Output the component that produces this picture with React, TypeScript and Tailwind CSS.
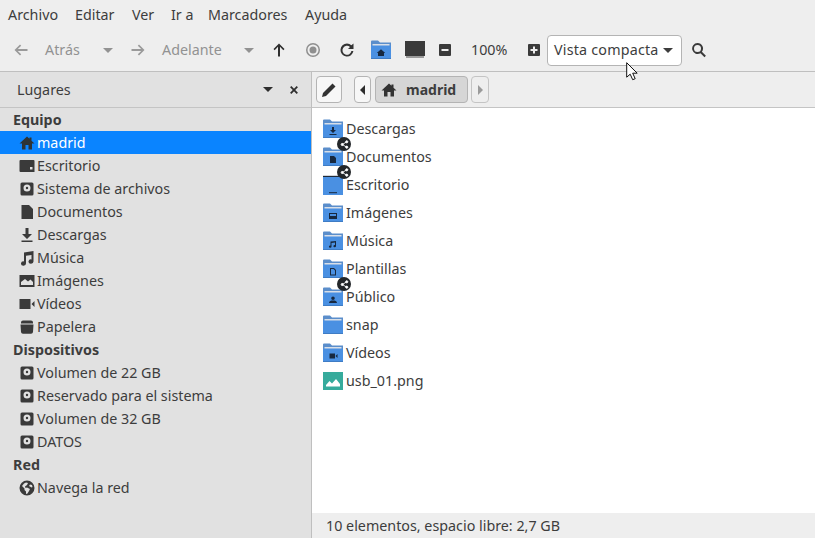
import type { ReactNode } from "react";

const FONT = "font-['Noto_Sans','Open_Sans',sans-serif]";

function Sym({ children, className = "" }: { children: ReactNode; className?: string }) {
  return (
    <svg viewBox="0 0 16 16" className={`h-4 w-4 shrink-0 ${className}`} fill="currentColor" aria-hidden>
      {children}
    </svg>
  );
}

const HomeGlyph = () => <path d="M8 1.500 .5 8.500h2.500v6h3.500V10h3v4.500H13v-6h2.500L12.500 5.700V2.500h-2v1.300z" />;
const DiskGlyph = () => (
  <path fillRule="evenodd" d="M3 1.500h10A1.500 1.500 0 0 1 14.500 3v10a1.500 1.500 0 0 1-1.500 1.500H3A1.500 1.500 0 0 1 1.500 13V3A1.500 1.500 0 0 1 3 1.500zM8 3.500a3.500 3.500 0 1 0 0 7 3.500 3.500 0 0 0 0-7zm0 2.300a1.200 1.200 0 1 1 0 2.400 1.200 1.200 0 0 1 0-2.400z" />
);

const placeIcons: Record<string, ReactNode> = {
  home: <HomeGlyph />,
  desktop: <path fillRule="evenodd" d="M1.500 2h13a1 1 0 0 1 1 1v11H1.500a1 1 0 0 1-1-1V3a1 1 0 0 1 1-1zM11 9v2.500h2.500V9z" />,
  disk: <DiskGlyph />,
  doc: <path d="M2.500 1h7.500L14 5v10H2.500z" />,
  down: <path d="M6.500 1h3v6H13l-5 5-5-5h3.500zM2.500 13.500h11V15h-11z" />,
  music: <path d="M5 2.500 14.500 1v10.500a2.500 2.200 0 1 1-2-2.100V5L7 5.800v7.700a2.500 2.200 0 1 1-2-2.100z" />,
  image: <path fillRule="evenodd" d="M.5 2h15v12H.5zM2 12h12V9l-2.500-2.500-2.500 2L6 6 2 9z" />,
  video: <path d="M.5 3h11v10H.5zM12.500 8l3-3v6z" />,
  trash: <path d="M4 1.500h8a2 2 0 0 1 2 2V4.500H2V3.500a2 2 0 0 1 2-2zM1.500 5.500h13L14 13a2 2 0 0 1-2 1.800H4A2 2 0 0 1 2 13z" />,
  globe: <path fillRule="evenodd" d="M8 .5a7.500 7.500 0 1 1 0 15A7.500 7.500 0 0 1 8 .5zM3 6l2.500 2.500V10L7 11.500V14l1.500-.5L10 11l1-2-3-1.500-1.500.5L6 6.500 8 5l1-2-2-.5-2 1zm8-1.500L10 6l2.500 1.500 1-.5-.5-2z" />,
};

const glyphs: Record<string, ReactNode> = {
  down: <path d="M9 8h2v3h2l-3 3-3-3h2zM6.500 15h7v1h-7z" />,
  doc: <path d="M7 9h4l2 2v5H7z" />,
  desktopBar: <path d="M6 17.200h8v1H6z" />,
  image: <path d="M6 10h8v6H6zM7 11v2h6v-2z" fillRule="evenodd" />,
  music: <path d="M7.500 10.500 13 10v5a1.300 1.100 0 1 1-1-1v-2.500l-3.500.4V15.500a1.300 1.100 0 1 1-1-1z" />,
  template: <path fillRule="evenodd" d="M7 9h4l2 2v5.500H7zM8 10v5.500h4V11.500L10.500 10z" />,
  public: <path d="M10 9.500a1.800 1.800 0 1 1 0 3.600 1.800 1.800 0 0 1 0-3.600zM6 16c0-2 2-2.500 4-2.500s4 .500 4 2.500z" />,
  video: <path d="M6.500 10.500h5.500v5H6.500zM12.500 13l2-2v4z" />,
  home: <path d="M10 9.200 5.800 13H7v3h6v-3h1.200z" />,
};

function Folder({ glyph, desktop = false }: { glyph?: string; desktop?: boolean }) {
  return (
    <svg viewBox="0 0 20 20" className="h-5 w-5 shrink-0" aria-hidden>
      {desktop ? (
        <>
          <path d="M0 1.500h20V20H0z" fill="#4a90e2" />
          <path d="M0 .8h20v1.200H0z" fill="#1f2a38" />
        </>
      ) : (
        <>
          <path d="M0 1.500A1 1 0 0 1 1 .5h6l2 2h11V8H0z" fill="#5b8ecb" />
          <path d="M1.500 4h17v3h-17z" fill="#d8dfe8" />
          <path d="M0 5.500h20V18a1 1 0 0 1-1 1H1a1 1 0 0 1-1-1z" fill="#4a90e2" />
          <path d="M0 18h20v1H0z" fill="#3f7cc4" />
        </>
      )}
      {glyph && <g fill="#17283f">{glyphs[glyph]}</g>}
    </svg>
  );
}

function ImageFile() {
  return (
    <svg viewBox="0 0 20 20" className="h-5 w-5 shrink-0" aria-hidden>
      <path d="M0 1h20v18H0z" fill="#36ab9c" />
      <path d="M3 15.500V14l3.500-4 2.500 2.500L13 8l4 5v2.500z" fill="#ffffff" />
    </svg>
  );
}

function ShareBadge() {
  return (
    <span className="absolute left-[14px] top-[-6px] flex h-[14px] w-[14px] items-center justify-center rounded-full bg-[#232629]">
      <svg viewBox="0 0 10 10" className="h-[9px] w-[9px]" fill="#fff" stroke="#fff" strokeWidth="1" aria-hidden>
        <path d="M7.500 2 2.500 5l5 3" fill="none" />
        <circle cx="7.500" cy="2" r="1.200" />
        <circle cx="2.500" cy="5" r="1.200" />
        <circle cx="7.500" cy="8" r="1.200" />
      </svg>
    </span>
  );
}

type PlaceRow = { kind: "head"; label: string } | { kind: "item"; label: string; icon: string; active?: boolean };

const places: PlaceRow[] = [
  { kind: "head", label: "Equipo" },
  { kind: "item", label: "madrid", icon: "home", active: true },
  { kind: "item", label: "Escritorio", icon: "desktop" },
  { kind: "item", label: "Sistema de archivos", icon: "disk" },
  { kind: "item", label: "Documentos", icon: "doc" },
  { kind: "item", label: "Descargas", icon: "down" },
  { kind: "item", label: "Música", icon: "music" },
  { kind: "item", label: "Imágenes", icon: "image" },
  { kind: "item", label: "Vídeos", icon: "video" },
  { kind: "item", label: "Papelera", icon: "trash" },
  { kind: "head", label: "Dispositivos" },
  { kind: "item", label: "Volumen de 22 GB", icon: "disk" },
  { kind: "item", label: "Reservado para el sistema", icon: "disk" },
  { kind: "item", label: "Volumen de 32 GB", icon: "disk" },
  { kind: "item", label: "DATOS", icon: "disk" },
  { kind: "head", label: "Red" },
  { kind: "item", label: "Navega la red", icon: "globe" },
];

const files = [
  { name: "Descargas", glyph: "down" },
  { name: "Documentos", glyph: "doc", shared: true },
  { name: "Escritorio", glyph: "desktopBar", shared: true, desktop: true },
  { name: "Imágenes", glyph: "image" },
  { name: "Música", glyph: "music" },
  { name: "Plantillas", glyph: "template" },
  { name: "Público", glyph: "public", shared: true },
  { name: "snap" },
  { name: "Vídeos", glyph: "video" },
  { name: "usb_01.png", image: true },
];

const menus = [
  { label: "Archivo", w: "w-[67px]" },
  { label: "Editar", w: "w-[57px]" },
  { label: "Ver", w: "w-[39px]" },
  { label: "Ir a", w: "w-[37px]" },
  { label: "Marcadores", w: "w-[97px]" },
  { label: "Ayuda", w: "w-[60px]" },
];

const Caret = ({ className = "" }: { className?: string }) => (
  <span className={`h-0 w-0 border-x-[5px] border-t-[5px] border-x-transparent ${className}`} />
);

function Toolbar() {
  return (
    <div className="flex h-[42px] items-center pl-[13px] text-[14.300px] text-[#3d3d3d]">
      <Sym className="text-[#9a9a9a]"><path d="M7 2.500 1.500 8 7 13.500l1.200-1.200L4.800 9H14.500V7H4.800l3.400-3.300z" /></Sym>
      <span className="ml-[16px] w-[36px] text-[#929292]">Atrás</span>
      <Caret className="ml-[22px] border-t-[#929292]" />
      <Sym className="ml-[17px] text-[#9a9a9a]"><path d="M9 2.500 14.500 8 9 13.500l-1.200-1.200L11.200 9H1.500V7h9.700L7.800 3.700z" /></Sym>
      <span className="ml-[16px] w-[60px] text-[#929292]">Adelante</span>
      <Caret className="ml-[22px] border-t-[#929292]" />
      <Sym className="ml-[17px] text-[#2e2e2e]"><path d="M8 1.500 13.500 7l-1.200 1.200L9 4.800V14.500H7V4.800L3.700 8.200 2.500 7z" /></Sym>
      <Sym className="ml-[18px] text-[#8f8f8f]">
        <path fillRule="evenodd" d="M8 1a7 7 0 1 1 0 14A7 7 0 0 1 8 1zm0 1.500a5.500 5.500 0 1 0 0 11 5.500 5.500 0 0 0 0-11zM8 4.500a3.500 3.500 0 1 1 0 7 3.500 3.500 0 0 1 0-7z" />
      </Sym>
      <Sym className="ml-[18px] text-[#333]">
        <path d="M8 1.500a6.500 6.500 0 0 1 4.400 1.700L14.500 1.500V7h-5.500l2-2A4.500 4.500 0 1 0 12.400 9h2A6.500 6.500 0 1 1 8 1.500z" />
      </Sym>
      <span className="ml-[16px]"><Folder glyph="home" /></span>
      <svg viewBox="0 0 20 20" className="ml-[14px] h-5 w-5 shrink-0" aria-hidden>
        <path d="M0 1h20v15H0z" fill="#3a3a3a" />
        <path d="M1 16h18v2H1z" fill="#9a9a9a" />
      </svg>
      <Sym className="ml-[12px] text-[#3a3a3a]"><path fillRule="evenodd" d="M3 2h10a1 1 0 0 1 1 1v10a1 1 0 0 1-1 1H3a1 1 0 0 1-1-1V3a1 1 0 0 1 1-1zm1.500 5v2h7V7z" /></Sym>
      <span className="ml-[18px] w-[36px]">100%</span>
      <Sym className="ml-[19px] text-[#3a3a3a]"><path fillRule="evenodd" d="M3 2h10a1 1 0 0 1 1 1v10a1 1 0 0 1-1 1H3a1 1 0 0 1-1-1V3a1 1 0 0 1 1-1zm4 2.500V7H4.500v2H7v2.500h2V9h2.500V7H9V4.500z" /></Sym>
      <div className="relative ml-[5px] flex h-[31px] w-[135px] items-center justify-between rounded-[4px] border border-[#b4b4b4] bg-white pl-[6px] pr-[8px]">
        <span className="tracking-[0.2px]">Vista compacta</span>
        <Caret className="border-t-[#3d3d3d]" />
        <svg viewBox="0 0 14 20" className="absolute left-[78px] top-[26px] h-5 w-[14px]" aria-hidden>
          <path d="M.7.700v14.500l3.500-3 2.500 5.500 2.500-1-2.500-5.500h4.500z" fill="#fff" stroke="#111" strokeWidth="1" />
        </svg>
      </div>
      <Sym className="ml-[9px] text-[#3a3a3a]">
        <path fillRule="evenodd" d="M6.500 1a5.500 5.500 0 0 1 4.400 8.800l4 4-1.400 1.400-4-4A5.500 5.500 0 1 1 6.500 1zm0 2a3.500 3.500 0 1 0 0 7 3.500 3.500 0 0 0 0-7z" />
      </Sym>
    </div>
  );
}

function Sidebar() {
  return (
    <aside className="flex w-[312px] shrink-0 flex-col border-r border-[#bfbfbf] bg-[#e1e1e1] text-[14.300px] text-[#3d3d3d]">
      <div className="flex h-[36px] shrink-0 items-center border-b border-[#c4c4c4] pl-[17px]">
        <span className="w-[246px]">Lugares</span>
        <Caret className="border-t-[#2e2e2e]" />
        <span className="ml-[17px] text-[#2e2e2e]">
          <svg viewBox="0 0 8 8" className="h-2 w-2" stroke="currentColor" strokeWidth="1.800" aria-hidden>
            <path d="M.7.700l6.600 6.600M7.300.700.7 7.300" />
          </svg>
        </span>
      </div>
      <div>
        {places.map((row) =>
          row.kind === "head" ? (
            <div key={row.label} className="flex h-[23px] items-center pl-[13px] font-bold">{row.label}</div>
          ) : (
            <div
              key={row.label}
              className={`flex h-[23px] items-center gap-[2px] pl-[19px] ${row.active ? "bg-[#0a84ff] text-white" : ""}`}
            >
              <Sym className={row.active ? "text-[#2e3436]" : "text-[#3a3a3a]"}>{placeIcons[row.icon]}</Sym>
              <span>{row.label}</span>
            </div>
          ),
        )}
      </div>
    </aside>
  );
}

function PathBar() {
  return (
    <div className="flex h-[36px] shrink-0 items-center border-b border-[#c4c4c4] pl-[4px] text-[#3d3d3d]">
      <button className="flex h-[27px] w-[26px] items-center justify-center rounded-[4px] border border-[#b4b4b4] bg-[#f7f7f7]">
        <Sym className="text-[#333]"><path d="M11.500 1.500 14.500 4.500 5 14l-4 1 1-4z" /></Sym>
      </button>
      <button className="ml-[12px] flex h-[27px] w-[17px] items-center justify-center rounded-[4px] border border-[#b4b4b4] bg-[#f7f7f7]">
        <span className="h-0 w-0 border-y-[5px] border-r-[5px] border-y-transparent border-r-[#2e2e2e]" />
      </button>
      <button className="ml-[4px] flex h-[27px] w-[93px] items-center rounded-[4px] border border-[#b4b4b4] bg-[#d6d6d6] pl-[5px]">
        <Sym className="text-[#333]"><HomeGlyph /></Sym>
        <span className="ml-[9px] text-[14px] font-bold">madrid</span>
      </button>
      <button className="ml-[3px] flex h-[27px] w-[18px] items-center justify-center rounded-[4px] border border-[#c4c4c4] bg-[#eeeeee]">
        <span className="h-0 w-0 border-y-[5px] border-l-[5px] border-y-transparent border-l-[#9a9a9a]" />
      </button>
    </div>
  );
}

function FileList() {
  return (
    <div className="flex-1 bg-white pl-[11px] pt-[7px] text-[14.300px] text-[#3d3d3d]">
      {files.map((file) => (
        <div key={file.name} className="relative flex h-[28px] items-center gap-[3px]">
          {file.image ? <ImageFile /> : <Folder glyph={file.glyph} desktop={file.desktop} />}
          {file.shared && <ShareBadge />}
          <span>{file.name}</span>
        </div>
      ))}
    </div>
  );
}

export default function App() {
  return (
    <div className={`flex h-[538px] w-[815px] flex-col overflow-hidden bg-[#eeeeee] ${FONT}`}>
      <nav className="flex h-[29px] shrink-0 items-center pl-[8px] text-[14.300px] text-[#3d3d3d]">
        {menus.map((m) => (
          <span key={m.label} className={m.w}>{m.label}</span>
        ))}
      </nav>
      <Toolbar />
      <div className="flex min-h-0 flex-1 border-t border-[#bfbfbf]">
        <Sidebar />
        <main className="flex min-w-0 flex-1 flex-col">
          <PathBar />
          <FileList />
          <div className="flex h-[25px] shrink-0 items-center pl-[14px] text-[14.300px] text-[#3d3d3d]">
            10 elementos, espacio libre: 2,7 GB
          </div>
        </main>
      </div>
    </div>
  );
}
